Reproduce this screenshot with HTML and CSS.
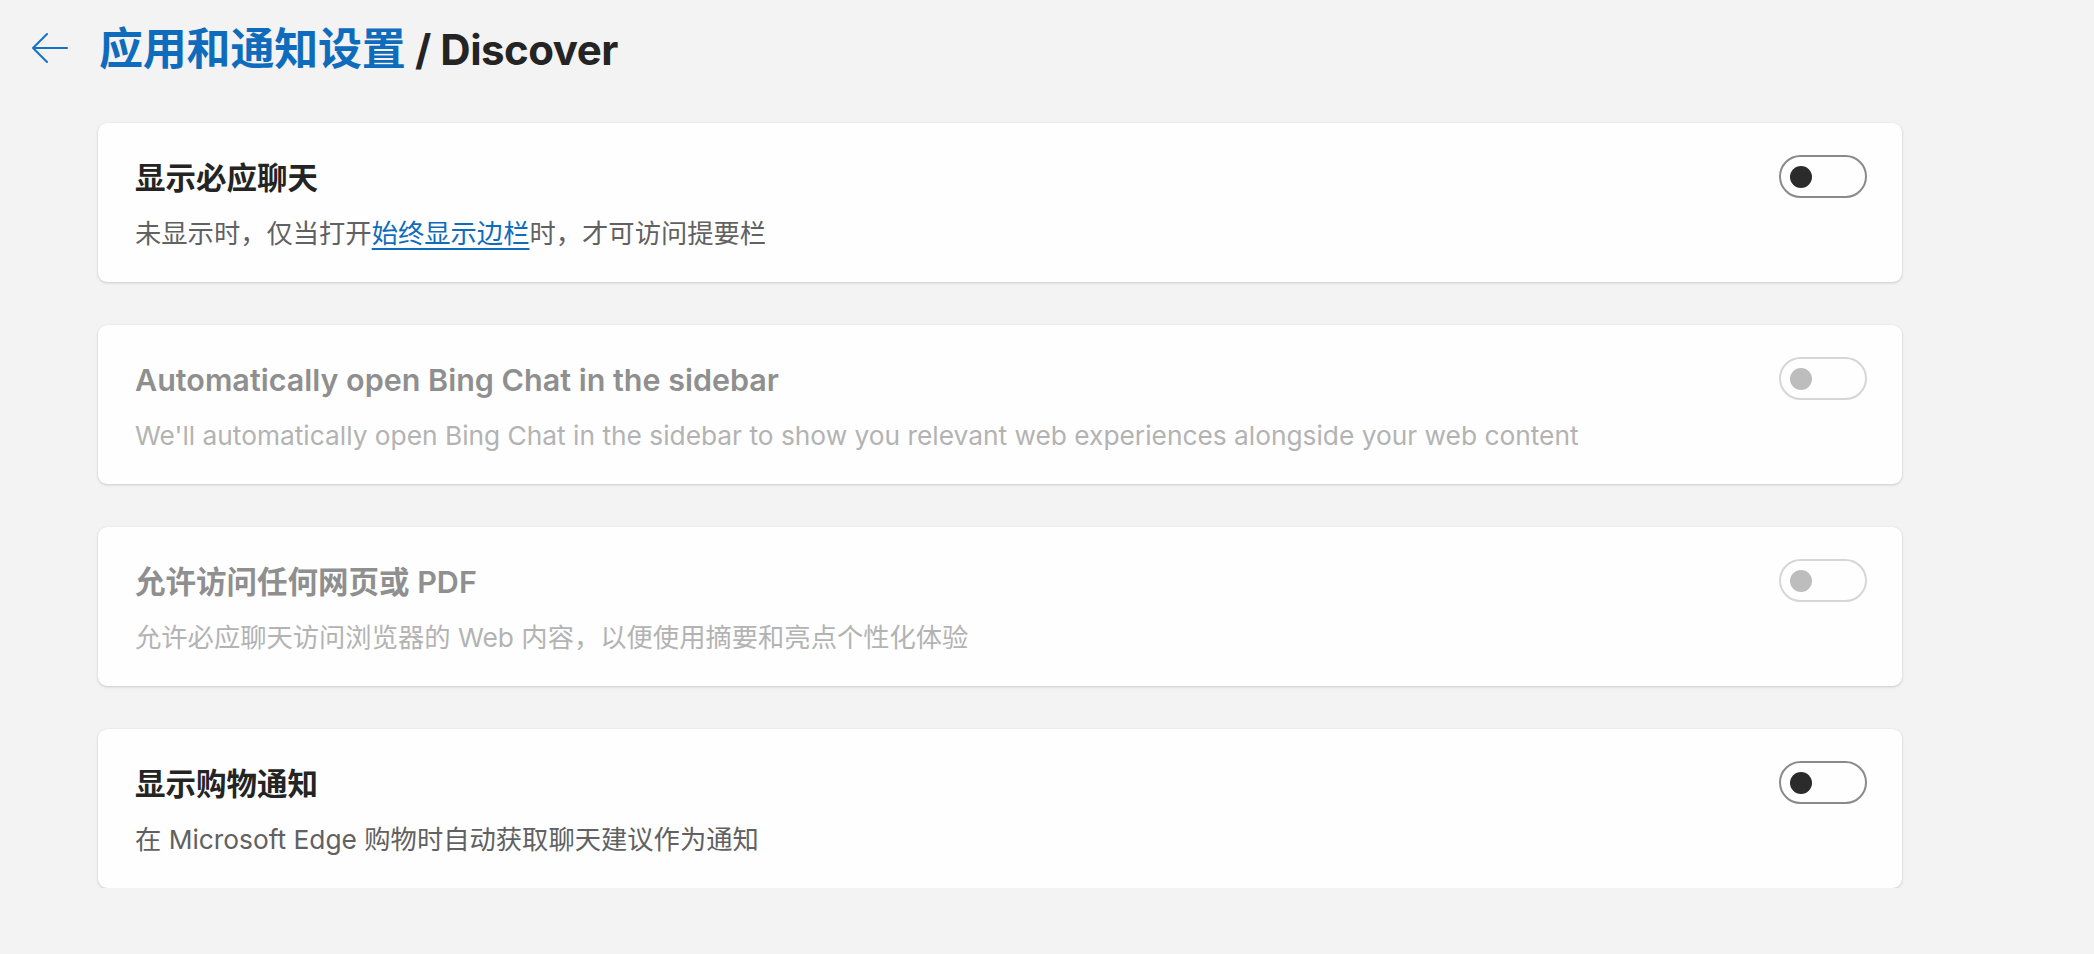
FILE: index.html
```html
<!DOCTYPE html>
<html lang="zh-CN">
<head>
<meta charset="utf-8">
<title>Discover</title>
<link rel="stylesheet" href="styles.css">
</head>
<body>
<div class="page">
  <header class="header">
    <button class="back" aria-label="返回">
      <svg width="36" height="32" viewBox="0 0 36 32" fill="none" stroke="#1570c9" stroke-width="2" stroke-linecap="round" stroke-linejoin="round">
        <path d="M1 16 H35 M15 2 L1 16 L15 30"/>
      </svg>
    </button>
    <h1 class="title"><span class="crumb">应用和通知设置</span> / Discover</h1>
  </header>
  <main class="list">
    <section class="card">
      <div class="text">
        <div class="card-title">显示必应聊天</div>
        <div class="card-desc">未显示时，仅当打开<a class="link" href="#">始终显示边栏</a>时，才可访问提要栏</div>
      </div>
      <div class="toggle"><span class="knob"></span></div>
    </section>
    <section class="card disabled">
      <div class="text">
        <div class="card-title">Automatically open Bing Chat in the sidebar</div>
        <div class="card-desc">We'll automatically open Bing Chat in the sidebar to show you relevant web experiences alongside your web content</div>
      </div>
      <div class="toggle"><span class="knob"></span></div>
    </section>
    <section class="card disabled">
      <div class="text">
        <div class="card-title">允许访问任何网页或 PDF</div>
        <div class="card-desc">允许必应聊天访问浏览器的 Web 内容，以便使用摘要和亮点个性化体验</div>
      </div>
      <div class="toggle"><span class="knob"></span></div>
    </section>
    <section class="card">
      <div class="text">
        <div class="card-title">显示购物通知</div>
        <div class="card-desc">在 Microsoft Edge 购物时自动获取聊天建议作为通知</div>
      </div>
      <div class="toggle"><span class="knob"></span></div>
    </section>
  </main>
</div>
</body>
</html>
```
FILE: styles.css
```css
html, body {
  margin: 0;
  padding: 0;
}
body {
  background: #f3f3f3;
  font-family: "Inter", "Noto Sans CJK SC", sans-serif;
  color: #242424;
}
.page {
  padding: 0 0 0 32px;
}
.header {
  display: flex;
  align-items: center;
  height: 98px;
  gap: 31px;
}
.back {
  border: 0;
  background: none;
  padding: 0;
  width: 36px;
  height: 32px;
  display: flex;
  margin-top: -2px;
}
.title {
  margin: 0;
  font-size: 42px;
  font-weight: 700;
  letter-spacing: -0.5px;
  color: #242424;
  line-height: 50px;
}
.crumb {
  color: #0f6cbd;
  font-size: 44px;
  letter-spacing: -0.2px;
}
.list {
  margin-left: 66px;
  width: 1804px;
  display: flex;
  flex-direction: column;
  gap: 43px;
  padding-top: 25px;
}
.card {
  background: #fefefe;
  border-radius: 9px;
  box-shadow: 0 1px 3px rgba(0, 0, 0, 0.16), 0 0 1px rgba(0, 0, 0, 0.08);
  height: 159px;
  box-sizing: border-box;
  padding: 35px 35px 0 37px;
  display: flex;
  justify-content: space-between;
  align-items: flex-start;
}
.text {
  display: flex;
  flex-direction: column;
  gap: 18px;
}
.card-title {
  font-size: 30.5px;
  font-weight: 600;
  line-height: 40px;
  color: #242424;
}
.card-desc {
  font-size: 26.3px;
  line-height: 36px;
  color: #616161;
}
.link {
  color: #0f6cbd;
  text-decoration: underline;
  text-decoration-thickness: 2px;
  text-underline-offset: 5px;
}
.toggle {
  width: 88px;
  height: 43px;
  box-sizing: border-box;
  border: 2px solid #8a8a8a;
  border-radius: 22px;
  display: flex;
  align-items: center;
  padding-left: 9px;
  margin-top: -3px;
}
.knob {
  width: 22px;
  height: 22px;
  border-radius: 50%;
  background: #2b2b2b;
}
.disabled .card-title {
  color: #8f8f8f;
}
.disabled .card-desc {
  color: #b3b3b3;
}
.disabled .toggle {
  border-color: #d6d6d6;
}
.disabled .knob {
  background: #bdbdbd;
}
```
